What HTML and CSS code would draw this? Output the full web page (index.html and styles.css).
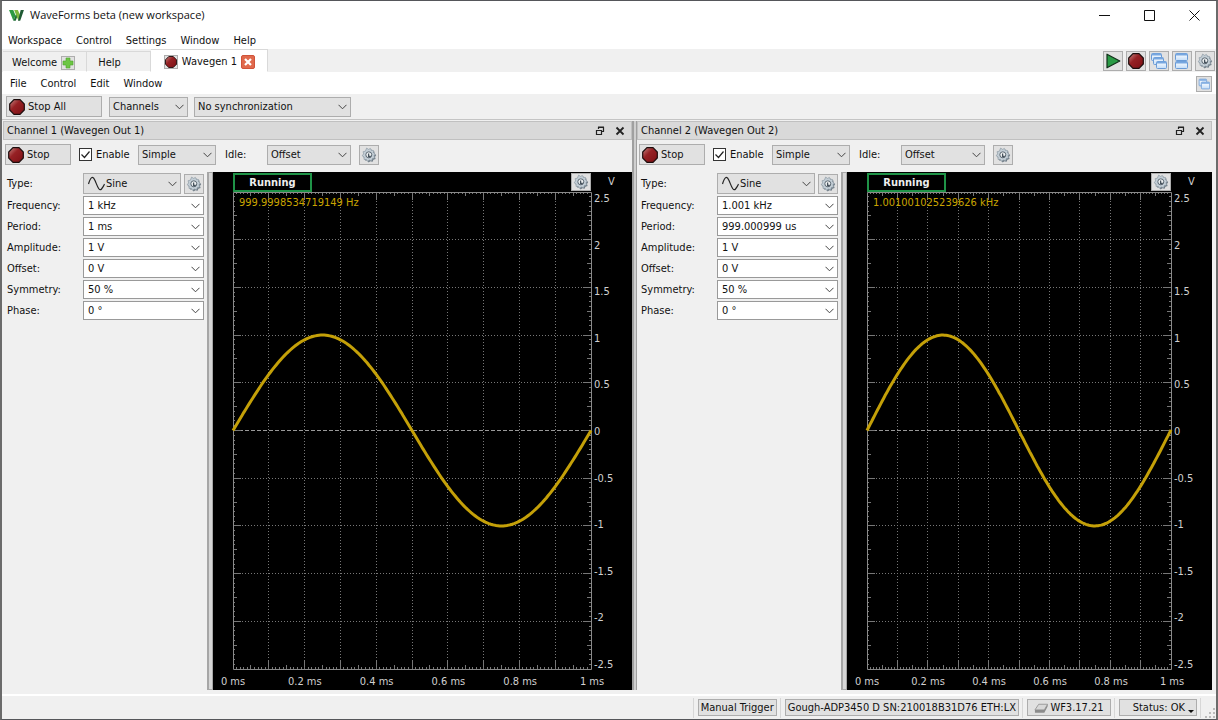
FILE: index.html
```
<!DOCTYPE html>
<html lang="en">
<head>
  <meta charset="UTF-8" />
  <meta name="viewport" content="width=device-width, initial-scale=1.0"/>
  <title>WaveForms beta (new workspace)</title>
  <link rel="stylesheet" href="styles.css">
</head>
<body>

  <!-- shared icons -->
  <svg class="sprites" aria-hidden="true">
    <defs>
      <linearGradient id="red" x1="0" y1="0" x2="1" y2="1">
        <stop offset="0" stop-color="#c98a86"/>
        <stop offset="0.4" stop-color="#962124"/>
        <stop offset="1" stop-color="#7d0f14"/>
      </linearGradient>
      <linearGradient id="blue" x1="0" y1="0" x2="0" y2="1">
        <stop offset="0" stop-color="#ffffff"/>
        <stop offset="1" stop-color="#c3ddf8"/>
      </linearGradient>
    </defs>
    <symbol id="i-stop" viewBox="0 0 16 16">
      <path d="M5 .7h6L15.3 5v6L11 15.3H5L.7 11V5z" fill="url(#red)" stroke="#1c0c0c" stroke-width="1.2"/>
    </symbol>
    <symbol id="i-play" viewBox="0 0 16 16">
      <path d="M2 1.2L14.8 8 2 14.8z" fill="#2a9b45" stroke="#12301a" stroke-width="1.2" stroke-linejoin="round"/>
    </symbol>
    <symbol id="i-gear" viewBox="0 0 16 16">
      <path d="M6 1.500l2 1.300 1.800-1 .9 1.900 2.200.2-.1 2.200 1.800 1.300-1.200 1.800.6 2.200-2.200.6-.8 2.100-2.200-.6-1.800 1.200-1.300-1.800-2.300-.1.100-2.300-1.900-1.300L3 7.300l-.5-2.200 2.300-.5z" fill="#6f7c86" transform="translate(.6 .7)"/>
      <path d="M6 1.500l2 1.300 1.800-1 .9 1.900 2.200.2-.1 2.200 1.800 1.300-1.200 1.800.6 2.200-2.200.6-.8 2.100-2.200-.6-1.800 1.200-1.300-1.800-2.300-.1.100-2.300-1.900-1.300L3 7.300l-.5-2.200 2.300-.5z" fill="#c3ced6" stroke="#8d9aa4" stroke-width=".7" transform="translate(-.4 -.4)"/>
      <circle cx="7.800" cy="7.800" r="3" fill="#f2f4f5" stroke="#5a6771" stroke-width="1"/>
      <path d="M7.600 6.500v3h2.200" fill="none" stroke="#46525c" stroke-width="1.300"/>
    </symbol>
    <symbol id="i-cascade" viewBox="0 0 16 16">
      <g fill="url(#blue)" stroke="#6a9bd6">
        <rect x=".5" y=".5" width="10" height="7" rx="1"/>
        <rect x="2.5" y="4.5" width="10" height="7" rx="1"/>
        <rect x="5.5" y="8.5" width="10" height="7" rx="1"/>
      </g>
      <path d="M1 1.5h9M3 5.5h9M6 9.5h9" stroke="#77a7e0" stroke-width="2"/>
    </symbol>
    <symbol id="i-tile" viewBox="0 0 16 16">
      <g fill="url(#blue)" stroke="#6a9bd6">
        <rect x="1.5" y=".5" width="12" height="7" rx="1"/>
        <rect x="1.5" y="8.5" width="12" height="7" rx="1"/>
      </g>
      <path d="M2 1.5h11M2 9.5h11" stroke="#77a7e0" stroke-width="2"/>
    </symbol>
    <symbol id="i-windows" viewBox="0 0 16 16">
      <g fill="url(#blue)" stroke="#6a9bd6">
        <rect x="1.5" y="1.5" width="10" height="9" rx="1"/>
        <rect x="4.5" y="5.5" width="11" height="9" rx="1"/>
      </g>
      <path d="M2 2.5h9M5 6.5h10" stroke="#77a7e0" stroke-width="2"/>
    </symbol>
    <symbol id="i-float" viewBox="0 0 10 10">
      <path d="M3.5 3V1.5h5v4H7M3 1h6" fill="none" stroke="#222" stroke-width="1.200"/>
      <path d="M1.5 4.5h5v4h-5zM1 4.500h6" fill="none" stroke="#222" stroke-width="1.200"/>
    </symbol>
    <symbol id="i-close" viewBox="0 0 10 10">
      <path d="M1.5 1.5l7 7M8.5 1.5l-7 7" stroke="#222" stroke-width="1.8"/>
    </symbol>
  </svg>

  <div class="window">
    <header class="titlebar">
      <svg class="logo" viewBox="0 0 16 14" aria-hidden="true">
        <path d="M0 1h4.500l2.500 6L4.600 12.600z" fill="#2c9a42"/>
        <path d="M4.600 12.600L8 4.500l1.600 1.800-2.400 6.300z" fill="#1c6b34"/>
        <path d="M5.500 1h4l2.300 5.400-1.800 6.200z" fill="#7cb83c"/>
        <path d="M9.600 12.600L12.500 1H16L12 12.600z" fill="#1f5a33"/>
      </svg>
      <h1>WaveForms beta (new workspace)</h1>
      <div class="win-buttons">
        <button aria-label="Minimize"><svg viewBox="0 0 11 11"><path d="M0 5.5h11" stroke="#111"/></svg></button>
        <button aria-label="Maximize"><svg viewBox="0 0 11 11"><path d="M.5 .5h10v10H.5z" fill="none" stroke="#111"/></svg></button>
        <button aria-label="Close"><svg viewBox="0 0 11 11"><path d="M.5 .5l10 10M10.5 .5l-10 10" stroke="#111"/></svg></button>
      </div>
    </header>

    <nav class="menu main-menu">
      <a href="#">Workspace</a>
      <a href="#">Control</a>
      <a href="#">Settings</a>
      <a href="#">Window</a>
      <a href="#">Help</a>
    </nav>

    <div class="tabs">
      <div class="tab welcome">
        <a href="#">Welcome</a>
        <button class="mini" aria-label="New instrument">
          <svg viewBox="0 0 12 12"><path d="M4 1h4v3h3v4H8v3H4V8H1V4h3z" fill="#6cc644" stroke="#4fa32c" stroke-width=".6"/></svg>
        </button>
      </div>
      <div class="tab help"><a href="#">Help</a></div>
      <div class="tab active">
        <button class="mini" aria-label="Stop Wavegen 1"><svg viewBox="0 0 16 16"><use href="#i-stop"/></svg></button>
        <a href="#">Wavegen 1</a>
        <button class="mini close" aria-label="Close tab">
          <svg viewBox="0 0 12 12"><path d="M3 3l6 6M9 3l-6 6" stroke="#fff" stroke-width="2.2"/></svg>
        </button>
      </div>
      <div class="tab-tools">
        <button class="icon-btn" aria-label="Run all"><svg><use href="#i-play"/></svg></button>
        <button class="icon-btn" aria-label="Stop all"><svg><use href="#i-stop"/></svg></button>
        <button class="icon-btn" aria-label="Cascade"><svg><use href="#i-cascade"/></svg></button>
        <button class="icon-btn" aria-label="Tile"><svg><use href="#i-tile"/></svg></button>
        <button class="icon-btn" aria-label="Options"><svg><use href="#i-gear"/></svg></button>
      </div>
    </div>

    <nav class="menu sub-menu">
      <a href="#">File</a>
      <a href="#">Control</a>
      <a href="#">Edit</a>
      <a href="#">Window</a>
      <button class="mini undock" aria-label="Undock"><svg viewBox="0 0 16 16"><use href="#i-windows"/></svg></button>
    </nav>

    <div class="toolbar">
      <button class="btn stop-all"><svg><use href="#i-stop"/></svg>Stop All</button>
      <select class="channels" aria-label="Channels"><option>Channels</option></select>
      <select class="sync" aria-label="Synchronization"><option>No synchronization</option></select>
    </div>

    <main class="docks">
      <section class="dock first">
        <div class="dock-title">
          <h2>Channel 1 (Wavegen Out 1)</h2>
          <button aria-label="Float"><svg><use href="#i-float"/></svg></button>
          <button aria-label="Close"><svg><use href="#i-close"/></svg></button>
        </div>
        <div class="dock-tools">
          <button class="btn stop"><svg><use href="#i-stop"/></svg>Stop</button>
          <label class="enable"><input type="checkbox" checked>Enable</label>
          <select class="mode" aria-label="Mode"><option>Simple</option></select>
          <label class="idle" for="idle1">Idle:</label>
          <select class="idle-mode" id="idle1"><option>Offset</option></select>
          <button class="icon-btn" aria-label="Channel options"><svg><use href="#i-gear"/></svg></button>
        </div>
        <div class="dock-body">
          <div class="params">
            <label for="type1">Type:</label>
            <div class="type">
              <select id="type1"><option>Sine</option></select>
              <button class="icon-btn" aria-label="Type options"><svg><use href="#i-gear"/></svg></button>
            </div>
            <label for="freq1">Frequency:</label>
            <select class="value" id="freq1"><option>1 kHz</option></select>
            <label for="period1">Period:</label>
            <select class="value" id="period1"><option>1 ms</option></select>
            <label for="amp1">Amplitude:</label>
            <select class="value" id="amp1"><option>1 V</option></select>
            <label for="offset1">Offset:</label>
            <select class="value" id="offset1"><option>0 V</option></select>
            <label for="sym1">Symmetry:</label>
            <select class="value" id="sym1"><option>50 %</option></select>
            <label for="phase1">Phase:</label>
            <select class="value" id="phase1"><option>0 °</option></select>
          </div>
          <div class="splitter"></div>
          <div class="scope">
            <div class="scope-top">
              <span class="running">Running</span>
              <button class="icon-btn" aria-label="Plot options"><svg><use href="#i-gear"/></svg></button>
              <span class="unit">V</span>
            </div>
            <div class="plot" data-period="1">
              <svg class="graph"></svg>
              <span class="readout">999.9998534719149 Hz</span>
            </div>
            <div class="y-axis">
              <span>2.5</span><span>2</span><span>1.5</span><span>1</span><span>0.5</span><span>0</span>
              <span>-0.5</span><span>-1</span><span>-1.5</span><span>-2</span><span>-2.5</span>
            </div>
            <div class="x-axis">
              <span>0 ms</span><span>0.2 ms</span><span>0.4 ms</span><span>0.6 ms</span><span>0.8 ms</span><span>1 ms</span>
            </div>
          </div>
        </div>
      </section>

      <div class="dock-split"></div>

      <section class="dock second">
        <div class="dock-title">
          <h2>Channel 2 (Wavegen Out 2)</h2>
          <button aria-label="Float"><svg><use href="#i-float"/></svg></button>
          <button aria-label="Close"><svg><use href="#i-close"/></svg></button>
        </div>
        <div class="dock-tools">
          <button class="btn stop"><svg><use href="#i-stop"/></svg>Stop</button>
          <label class="enable"><input type="checkbox" checked>Enable</label>
          <select class="mode" aria-label="Mode"><option>Simple</option></select>
          <label class="idle" for="idle2">Idle:</label>
          <select class="idle-mode" id="idle2"><option>Offset</option></select>
          <button class="icon-btn" aria-label="Channel options"><svg><use href="#i-gear"/></svg></button>
        </div>
        <div class="dock-body">
          <div class="params">
            <label for="type2">Type:</label>
            <div class="type">
              <select id="type2"><option>Sine</option></select>
              <button class="icon-btn" aria-label="Type options"><svg><use href="#i-gear"/></svg></button>
            </div>
            <label for="freq2">Frequency:</label>
            <select class="value" id="freq2"><option>1.001 kHz</option></select>
            <label for="period2">Period:</label>
            <select class="value" id="period2"><option>999.000999 us</option></select>
            <label for="amp2">Amplitude:</label>
            <select class="value" id="amp2"><option>1 V</option></select>
            <label for="offset2">Offset:</label>
            <select class="value" id="offset2"><option>0 V</option></select>
            <label for="sym2">Symmetry:</label>
            <select class="value" id="sym2"><option>50 %</option></select>
            <label for="phase2">Phase:</label>
            <select class="value" id="phase2"><option>0 °</option></select>
          </div>
          <div class="splitter"></div>
          <div class="scope">
            <div class="scope-top">
              <span class="running">Running</span>
              <button class="icon-btn" aria-label="Plot options"><svg><use href="#i-gear"/></svg></button>
              <span class="unit">V</span>
            </div>
            <div class="plot" data-period="0.999">
              <svg class="graph"></svg>
              <span class="readout">1.001001025239626 kHz</span>
            </div>
            <div class="y-axis">
              <span>2.5</span><span>2</span><span>1.5</span><span>1</span><span>0.5</span><span>0</span>
              <span>-0.5</span><span>-1</span><span>-1.5</span><span>-2</span><span>-2.5</span>
            </div>
            <div class="x-axis">
              <span>0 ms</span><span>0.2 ms</span><span>0.4 ms</span><span>0.6 ms</span><span>0.8 ms</span><span>1 ms</span>
            </div>
          </div>
        </div>
      </section>
    </main>

    <footer class="statusbar">
      <div class="cell"><button class="btn">Manual Trigger</button></div>
      <div class="cell"><button class="btn">Gough-ADP3450 D SN:210018B31D76 ETH:LX</button></div>
      <div class="cell">
        <button class="btn version">
          <svg viewBox="0 0 16 12"><path d="M5 2h9.5L11 8H1z" fill="#d8d8d8" stroke="#999"/><path d="M1 8h10l3.5-6v2.5L11 11H1z" fill="#8c8c8c"/></svg>WF3.17.21
        </button>
      </div>
      <div class="cell"><button class="btn status">Status: OK <i class="caret"></i></button></div>
      <div class="cell grip">
        <svg viewBox="0 0 10 10"><path d="M8 0h2v2H8zM8 4h2v2H8zM4 4h2v2H4zM8 8h2v2H8zM4 8h2v2H4zM0 8h2v2H0z" fill="#bbb"/></svg>
      </div>
    </footer>
  </div>

  <script src="script.js"></script>
</body>
</html>
```
FILE: styles.css
```
* {
  box-sizing: border-box;
}

body {
  margin: 0;
  background: #fff;
  font-family: 'DejaVu Sans Condensed', 'DejaVu Sans', sans-serif;
  font-size: 11px;
  line-height: 14px;
  color: #111;
}

.sprites {
  position: absolute;
  width: 0;
  height: 0;
}

button, select, input {
  font: inherit;
  color: inherit;
  margin: 0;
}

button {
  display: flex;
  align-items: center;
  justify-content: center;
  flex: none;
  padding: 0;
  border: none;
  background: none;
}

svg {
  display: block;
  flex: none;
}

a {
  color: inherit;
  text-decoration: none;
}

h1, h2 {
  margin: 0;
  font-size: inherit;
  font-weight: normal;
}

.window {
  display: flex;
  flex-direction: column;
  height: 100vh;
  background: #f0f0f0;
  border: 1px solid #55565a;
  border-left: 2px solid #6b6b6b;
  border-right: 2px solid #6b6b6b;
}

/* title bar and menus */
.titlebar {
  display: flex;
  align-items: center;
  height: 30px;
  padding: 0 16px 2px 7px;
  gap: 6px;
  background: #fff;
}

.titlebar h1 {
  flex: 1;
  font-family: 'Open Sans', sans-serif;
  font-size: 11px;
}

.logo {
  width: 15px;
  height: 13px;
}

.win-buttons {
  display: flex;
  gap: 34px;
}

.win-buttons svg {
  width: 11px;
  height: 11px;
}

.menu {
  display: flex;
  align-items: center;
  gap: 14px;
  background: #fff;
}

.main-menu {
  height: 18px;
  padding: 2px 6px 0;
}

.sub-menu {
  height: 22px;
  padding: 2px 4px 0 8px;
}

.undock {
  margin-left: auto;
}

/* tabs */
.tabs {
  display: flex;
  align-items: flex-end;
  height: 23px;
  padding: 0 1px;
}

.tab {
  display: flex;
  align-items: center;
  height: 21px;
  padding: 2px 9px 0;
  gap: 4px;
  border: 1px solid #d9d9d9;
  border-left: none;
  border-bottom-color: #fff;
}

.tab.welcome {
  padding-right: 11px;
}

.tab.help {
  padding: 2px 29px 0 11px;
}

.tab.active {
  height: 23px;
  padding: 2px 12px 0 13px;
  background: #fff;
}

.mini {
  width: 14px;
  height: 14px;
  background: #e1e1e1;
  border: 1px solid #adadad;
}

.mini svg {
  width: 12px;
  height: 12px;
}

.mini.close {
  background: #e0694c;
  border-color: #d0533a;
  border-radius: 2px;
}

.undock.mini {
  width: 16px;
  height: 16px;
}

.tab-tools {
  display: flex;
  gap: 3px;
  margin-left: auto;
  padding-bottom: 1px;
}

.icon-btn {
  width: 20px;
  height: 20px;
  background: #e1e1e1;
  border: 1px solid #adadad;
}

.icon-btn svg {
  width: 16px;
  height: 16px;
}

/* buttons and drop-downs */
.btn {
  height: 21px;
  gap: 3px;
  background: #e1e1e1;
  border: 1px solid #adadad;
}

.btn svg {
  width: 16px;
  height: 16px;
}

.stop-all, .stop {
  justify-content: flex-start;
  padding-left: 2px;
}

select {
  appearance: none;
  height: 20px;
  padding: 0 16px 0 3px;
  border: 1px solid #adadad;
  border-radius: 0;
  background: #e1e1e1 url("data:image/svg+xml,%3Csvg xmlns='http://www.w3.org/2000/svg' width='9' height='6'%3E%3Cpath d='M.5 .8l4 4 4-4' fill='none' stroke='%23444'/%3E%3C/svg%3E") no-repeat right 3px center;
}

.toolbar {
  display: flex;
  align-items: center;
  height: 25px;
  padding-left: 4px;
  gap: 6px;
}

.stop-all {
  width: 96px;
}

.channels {
  width: 79px;
  margin-left: 1px;
}

.sync {
  width: 157px;
}

/* docks */
.docks {
  display: flex;
  flex: 1;
  min-height: 0;
  padding: 1px 4px 4px 1px;
  border-top: 1px solid #c4c4c4;
}

.dock {
  display: flex;
  flex-direction: column;
  min-width: 0;
}

.dock.first {
  flex: 629 1 0;
}

.dock.second {
  flex: 575 1 0;
}

.dock-split {
  width: 5px;
  background: #cfcfcf;
  border: 1px solid #a0a0a0;
  border-width: 0 1px 0 2px;
}

.dock-title {
  display: flex;
  align-items: center;
  height: 19px;
  padding: 1px 6px 0 3px;
  gap: 10px;
  background: #d9d9d9;
  border: 1px solid #c0c0c0;
}

.dock-title h2 {
  flex: 1;
}

.dock-title svg {
  width: 10px;
  height: 10px;
}

.dock-tools {
  display: flex;
  align-items: center;
  height: 32px;
  padding: 0 0 3px 2px;
}

.stop {
  width: 66px;
}

.enable {
  display: flex;
  align-items: center;
  width: 59px;
  margin-left: 8px;
  gap: 4px;
}

.enable input {
  appearance: none;
  width: 13px;
  height: 13px;
  border: 1px solid #333;
  background: #fff;
}

.enable input:checked {
  background: #fff url("data:image/svg+xml,%3Csvg xmlns='http://www.w3.org/2000/svg' width='11' height='11'%3E%3Cpath d='M1.5 5.5l3 3 5-6' fill='none' stroke='%23222' stroke-width='1.2'/%3E%3C/svg%3E") center;
}

.mode {
  width: 78px;
}

.idle {
  width: 42px;
  margin-left: 9px;
}

.idle-mode {
  width: 84px;
  margin-right: 8px;
}

.dock-body {
  display: flex;
  flex: 1;
  min-height: 0;
}

.params {
  display: grid;
  grid-template-columns: 76px 121px;
  grid-template-rows: 21px;
  grid-auto-rows: 19px;
  align-content: start;
  align-items: center;
  row-gap: 2px;
  width: 204px;
  padding: 1px 0 0 4px;
}

.type {
  display: flex;
  align-items: center;
  gap: 3px;
}

.type select {
  flex: 1;
  min-width: 0;
  height: 21px;
  padding-left: 22px;
  background-image: url("data:image/svg+xml,%3Csvg xmlns='http://www.w3.org/2000/svg' width='9' height='6'%3E%3Cpath d='M.5 .8l4 4 4-4' fill='none' stroke='%23444'/%3E%3C/svg%3E"), url("data:image/svg+xml,%3Csvg xmlns='http://www.w3.org/2000/svg' width='17' height='16'%3E%3Cpath d='M.5 8C3 0 5 0 7 4.500S11 16 13.500 13 15.500 10 16.500 8' fill='none' stroke='%23222' stroke-width='1.200'/%3E%3C/svg%3E");
  background-repeat: no-repeat;
  background-position: right 3px center, left 4px center;
}

.value {
  width: 121px;
  height: 19px;
  padding-left: 4px;
  background-color: #fff;
  border-color: #999;
}

.splitter {
  width: 6px;
  background: #d6d6d6;
  border: 1px solid #a6a6a6;
  border-left-width: 2px;
}

/* oscilloscope view */
.scope {
  display: grid;
  flex: 1;
  min-width: 0;
  grid-template-columns: 1fr 40px;
  grid-template-rows: 20px 1fr 20px;
  padding-left: 20px;
  background: #000;
  color: #d0d0d0;
}

.scope-top {
  grid-column: 1 / 3;
  display: flex;
  align-items: center;
}

.running {
  width: 79px;
  height: 19px;
  border: 2px solid #1f9347;
  font-weight: bold;
  line-height: 16px;
  text-align: center;
  color: #eee;
}

.scope-top .icon-btn {
  height: 18px;
  margin-left: auto;
}

.unit {
  width: 41px;
  text-align: center;
}

.plot {
  position: relative;
}

.graph {
  position: absolute;
  width: 100%;
  height: 100%;
  overflow: visible;
}

.readout {
  position: absolute;
  top: 4px;
  left: 6px;
  color: #c9a400;
}

.y-axis {
  display: flex;
  flex-direction: column;
  justify-content: space-between;
  margin-bottom: -2px;
  padding-left: 2px;
}

.x-axis {
  display: flex;
  justify-content: space-between;
  padding-top: 5px;
}

/* zero-width labels sit centred on their grid line */
.x-axis span {
  display: flex;
  justify-content: center;
  width: 0;
  white-space: nowrap;
}

/* graph strokes */
.frame {
  fill: none;
  stroke: #8a8a8a;
}

.grid {
  fill: none;
  stroke: #777;
  stroke-dasharray: 1 2;
}

.zero {
  stroke: #999;
  stroke-dasharray: 4 2;
}

.ticks {
  fill: none;
  stroke: #777;
}

.wave {
  fill: none;
  stroke: #c4a008;
  stroke-width: 3;
}

/* status bar */
.statusbar {
  display: flex;
  justify-content: flex-end;
  align-items: center;
  height: 25px;
  border-top: 2px solid #fff;
}

.cell {
  display: flex;
  align-items: center;
  height: 20px;
  padding: 0 3px 0 4px;
  border-left: 1px solid #d7d7d7;
}

.cell .btn {
  height: 17px;
  padding: 0 2px;
}

.cell .version {
  width: 84px;
  padding: 0;
  gap: 1px;
}

.version svg {
  width: 15px;
  height: 12px;
}

.cell .status {
  width: 78px;
  justify-content: flex-end;
}

.caret {
  align-self: flex-end;
  margin-bottom: 2px;
  border: 3px solid transparent;
  border-top-color: #111;
  border-bottom: none;
}

.cell.grip {
  align-items: flex-end;
  padding-right: 1px;
}

.grip svg {
  width: 10px;
  height: 10px;
}
```
FILE: script.js
```
const NS = "http://www.w3.org/2000/svg";

function addPath(svg, cls, d) {
  const path = document.createElementNS(NS, "path");
  path.setAttribute("class", cls);
  path.setAttribute("d", d);
  svg.appendChild(path);
}

// snap to the pixel centre so that 1px lines stay sharp
const snap = (v) => Math.floor(v) + 0.5;

function drawPlot(plot) {
  const svg = plot.querySelector(".graph");
  const period = Number(plot.dataset.period);
  const w = plot.clientWidth - 1;
  const h = plot.clientHeight - 1;
  svg.innerHTML = "";

  let grid = "";
  for (let i = 1; i < 10; i++) {
    grid += `M${snap(w * i / 10)} 0V${h}`;
    if (i !== 5) grid += `M0 ${snap(h * i / 10)}H${w}`;
  }
  addPath(svg, "grid", grid);
  addPath(svg, "zero", `M0 ${snap(h / 2)}H${w}`);

  // ten divisions of ten ticks, longer at the half and the whole
  let ticks = "";
  for (let i = 1; i < 100; i++) {
    const len = i % 10 === 0 ? 8 : i % 5 === 0 ? 4 : 2;
    const x = snap(w * i / 100);
    const y = snap(h * i / 100);
    ticks += `M${x} 0v${len}M${x} ${h}v${-len}M0 ${y}h${len}M${w} ${y}h${-len}`;
  }
  addPath(svg, "ticks", ticks);
  addPath(svg, "frame", `M.5 .5H${snap(w)}V${snap(h)}H.5z`);

  let wave = "";
  for (let i = 0; i <= 200; i++) {
    const t = i / 200;
    const v = Math.sin(2 * Math.PI * t / period);
    wave += `${i ? "L" : "M"}${(w * t).toFixed(1)} ${(h / 2 - v * h / 5).toFixed(1)}`;
  }
  addPath(svg, "wave", wave);
}

function drawAll() {
  document.querySelectorAll(".plot").forEach(drawPlot);
}

window.addEventListener("resize", drawAll);
drawAll();
```
